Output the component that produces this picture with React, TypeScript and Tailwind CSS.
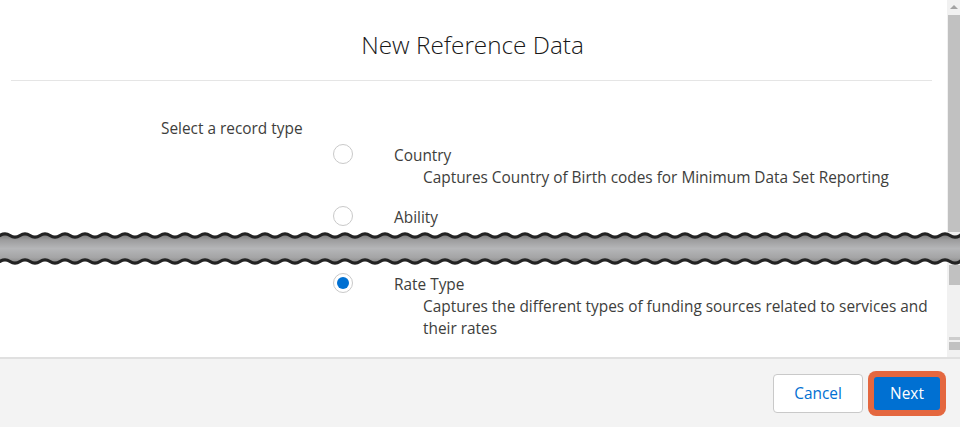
import React from "react";

function Radio({ checked }: { checked?: boolean }) {
  return (
    <div className="w-[20px] h-[20px] shrink-0 rounded-full border border-[#c9c9c9] bg-white flex items-center justify-center">
      {checked ? <div className="w-[12px] h-[12px] rounded-full bg-[#0070d2]" /> : null}
    </div>
  );
}

function Option({
  label,
  desc,
  checked,
}: {
  label: string;
  desc?: string;
  checked?: boolean;
}) {
  return (
    <div className="flex pl-[333px] pr-[12px]">
      <Radio checked={checked} />
      <div className="ml-[41px] flex-1 pt-[1px]">
        <div className="text-[15.4px] leading-[22px] text-[#3e3e3c]">{label}</div>
        {desc ? (
          <div className="pl-[29px] text-[15.4px] leading-[22px] text-[#3e3e3c]">{desc}</div>
        ) : null}
      </div>
    </div>
  );
}

function Wave() {
  const w = 960;
  const period = 20;
  const amp = 1.7;
  const make = (y: number) => {
    let d = `M-5 ${y} L0 ${y}`;
    for (let x = 0; x < w + period; x += period) {
      d += ` Q${x + period / 4} ${y - amp * 2} ${x + period / 2} ${y} Q${x + (3 * period) / 4} ${y + amp * 2} ${x + period} ${y}`;
    }
    return d;
  };
  const top = make(4.5);
  const bot = make(30.5);
  return (
    <svg width={960} height={36} viewBox="0 0 960 36" className="absolute left-0 top-[-1px]">
      <defs>
        <linearGradient id="g" x1="0" y1="0" x2="0" y2="1">
          <stop offset="0" stopColor="#6e6e6e" />
          <stop offset="0.22" stopColor="#9c9c9d" />
          <stop offset="0.5" stopColor="#b5b6b8" />
          <stop offset="0.8" stopColor="#a4a4a5" />
          <stop offset="1" stopColor="#7e7e7e" />
        </linearGradient>
        <clipPath id="c">
          <path d={`${top} L${w + period} 35 L-5 35 Z`} />
        </clipPath>
        <clipPath id="c2">
          <path d={`${bot} L${w + period} 0 L-5 0 Z`} />
        </clipPath>
      </defs>
      <g clipPath="url(#c)">
        <g clipPath="url(#c2)">
          <rect x="0" y="2" width="960" height="31" fill="url(#g)" />
        </g>
      </g>
      <path d={top} fill="none" stroke="#232323" strokeWidth={3.2} />
      <path d={bot} fill="none" stroke="#232323" strokeWidth={3.2} />
    </svg>
  );
}

export default function App() {
  return (
    <div
      className="w-[960px] h-[427px] flex flex-col overflow-hidden bg-white"
      style={{ fontFamily: '"Open Sans", "Noto Sans", sans-serif' }}
    >
      {/* top part */}
      <div className="h-[232px] flex shrink-0">
        <div className="flex-1 overflow-hidden bg-white">
          <div className="ml-[11px] mr-[15px] h-[81px] border-b border-[#e5e5e5] flex items-center justify-center pt-[10px]">
            <h2 className="text-[24.3px] font-light text-[#181818] leading-[30px] ml-[2px]">New Reference Data</h2>
          </div>
          <div className="pl-[161px] pt-[37px] text-[15.4px] leading-[21px] text-[#3e3e3c]">Select a record type</div>
          <div className="pt-[5px] flex flex-col gap-[17px]">
            <Option label="Country" desc="Captures Country of Birth codes for Minimum Data Set Reporting" />
            <Option label="Ability" />
          </div>
        </div>
        <div className="w-[13px] bg-[#f1f1f1] flex flex-col">
          <div className="h-[14px] flex items-center justify-center">
            <div className="w-0 h-0 border-l-[4px] border-r-[4px] border-b-[4px] border-l-transparent border-r-transparent border-b-[#a3a3a3]" />
          </div>
          <div className="flex-1 ml-[1px] mt-[1px] bg-[#c1c1c1]" />
        </div>
      </div>

      {/* break */}
      <div className="h-[33px] shrink-0 relative flex">
        <div className="flex-1 bg-white" />
        <div className="w-[13px] bg-[#f1f1f1]" />
        <Wave />
      </div>

      {/* bottom part */}
      <div className="h-[92px] flex shrink-0">
        <div className="flex-1 overflow-hidden bg-white pt-[8px]">
          <Option
            checked
            label="Rate Type"
            desc="Captures the different types of funding sources related to services and their rates"
          />
        </div>
        <div className="w-[13px] bg-[#f1f1f1] flex flex-col">
          <div className="h-[20px] ml-[2px] bg-[#c1c1c1]" />
          <div className="flex-1" />
          <div className="h-[3px] ml-[2px] bg-[#cdcdcd]" />
          <div className="h-[2px]" />
          <div className="h-[8px] ml-[2px] bg-[#c1c1c1]" />
          <div className="h-[7px]" />
        </div>
      </div>

      {/* footer */}
      <div className="flex-1 border-t-2 border-[#e0e0e0] bg-[#f3f3f3] flex items-start justify-end pt-[15px] pr-[14px]">
        <button className="w-[90px] h-[39px] rounded-[4px] border border-[#c9c9c9] bg-white text-[#0070d2] text-[15.4px]">
          Cancel
        </button>
        <div className="ml-[5px] -mt-[3px] p-[6px] rounded-[8px] bg-[#e4673f]">
          <button className="w-[66px] h-[33px] rounded-[3px] bg-[#0070d2] text-white text-[15.4px] block">
            Next
          </button>
        </div>
      </div>
    </div>
  );
}
